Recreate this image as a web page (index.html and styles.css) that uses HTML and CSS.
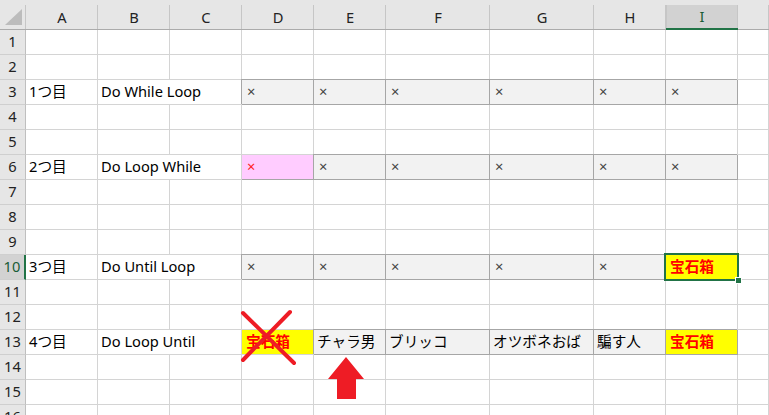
FILE: index.html
```html
<!DOCTYPE html>
<html lang="ja">
<head>
<meta charset="utf-8">
<title>Sheet</title>
<link rel="stylesheet" href="styles.css">
</head>
<body>
<div class="sheet">
  <div class="grid">
    <div class="ch corner"><span class="tri"></span></div>
    <div class="ch">A</div><div class="ch">B</div><div class="ch">C</div><div class="ch">D</div><div class="ch">E</div><div class="ch">F</div><div class="ch">G</div><div class="ch">H</div><div class="ch sel">I</div><div class="ch"></div>

    <div class="rh">1</div><div class="c"></div><div class="c"></div><div class="c"></div><div class="c"></div><div class="c"></div><div class="c"></div><div class="c"></div><div class="c"></div><div class="c"></div><div class="c"></div>
    <div class="rh">2</div><div class="c"></div><div class="c"></div><div class="c"></div><div class="c"></div><div class="c"></div><div class="c"></div><div class="c"></div><div class="c"></div><div class="c"></div><div class="c"></div>
    <div class="rh">3</div><div class="c">1つ目</div><div class="c span2">Do While Loop</div><div class="c b x">×</div><div class="c b x">×</div><div class="c b x">×</div><div class="c b x">×</div><div class="c b x">×</div><div class="c b x">×</div><div class="c"></div>
    <div class="rh">4</div><div class="c"></div><div class="c"></div><div class="c"></div><div class="c"></div><div class="c"></div><div class="c"></div><div class="c"></div><div class="c"></div><div class="c"></div><div class="c"></div>
    <div class="rh">5</div><div class="c"></div><div class="c"></div><div class="c"></div><div class="c"></div><div class="c"></div><div class="c"></div><div class="c"></div><div class="c"></div><div class="c"></div><div class="c"></div>
    <div class="rh">6</div><div class="c">2つ目</div><div class="c span2">Do Loop While</div><div class="c pink x">×</div><div class="c b x">×</div><div class="c b x">×</div><div class="c b x">×</div><div class="c b x">×</div><div class="c b x">×</div><div class="c"></div>
    <div class="rh">7</div><div class="c"></div><div class="c"></div><div class="c"></div><div class="c"></div><div class="c"></div><div class="c"></div><div class="c"></div><div class="c"></div><div class="c"></div><div class="c"></div>
    <div class="rh">8</div><div class="c"></div><div class="c"></div><div class="c"></div><div class="c"></div><div class="c"></div><div class="c"></div><div class="c"></div><div class="c"></div><div class="c"></div><div class="c"></div>
    <div class="rh">9</div><div class="c"></div><div class="c"></div><div class="c"></div><div class="c"></div><div class="c"></div><div class="c"></div><div class="c"></div><div class="c"></div><div class="c"></div><div class="c"></div>
    <div class="rh rsel">10</div><div class="c">3つ目</div><div class="c span2">Do Until Loop</div><div class="c b x">×</div><div class="c b x">×</div><div class="c b x">×</div><div class="c b x">×</div><div class="c b x">×</div><div class="c b yel active">宝石箱</div><div class="c"></div>
    <div class="rh">11</div><div class="c"></div><div class="c"></div><div class="c"></div><div class="c"></div><div class="c"></div><div class="c"></div><div class="c"></div><div class="c"></div><div class="c"></div><div class="c"></div>
    <div class="rh">12</div><div class="c"></div><div class="c"></div><div class="c"></div><div class="c"></div><div class="c"></div><div class="c"></div><div class="c"></div><div class="c"></div><div class="c"></div><div class="c"></div>
    <div class="rh">13</div><div class="c">4つ目</div><div class="c span2">Do Loop Until</div><div class="c yel">宝石箱</div><div class="c b">チャラ男</div><div class="c b">ブリッコ</div><div class="c b">オツボネおば</div><div class="c b">騙す人</div><div class="c b yel">宝石箱</div><div class="c"></div>
    <div class="rh">14</div><div class="c"></div><div class="c"></div><div class="c"></div><div class="c"></div><div class="c"></div><div class="c"></div><div class="c"></div><div class="c"></div><div class="c"></div><div class="c"></div>
    <div class="rh">15</div><div class="c"></div><div class="c"></div><div class="c"></div><div class="c"></div><div class="c"></div><div class="c"></div><div class="c"></div><div class="c"></div><div class="c"></div><div class="c"></div>
    <div class="rh">16</div><div class="c"></div><div class="c"></div><div class="c"></div><div class="c"></div><div class="c"></div><div class="c"></div><div class="c"></div><div class="c"></div><div class="c"></div><div class="c"></div>
  </div>
  <svg class="overlay" width="769" height="415" viewBox="0 0 769 415" xmlns="http://www.w3.org/2000/svg">
    <line x1="243" y1="313" x2="294" y2="363" stroke="#ee1c25" stroke-width="4" stroke-linecap="round"/>
    <line x1="290" y1="312" x2="243" y2="360" stroke="#ee1c25" stroke-width="4" stroke-linecap="round"/>
    <polygon points="346,357 364,379 356,379 356,399 337,399 337,379 328,379" fill="#ee1c25"/>
  </svg>
</div>
</body>
</html>
```

FILE: styles.css
```css
html, body {
  margin: 0;
  padding: 0;
  background: #ffffff;
  overflow: hidden;
}
body {
  width: 769px;
  height: 415px;
}
.sheet {
  position: relative;
  width: 769px;
  height: 415px;
  overflow: hidden;
  font-family: "Noto Sans", "Noto Sans CJK JP", sans-serif;
  font-size: 14.67px;
  color: #000;
}
.grid {
  display: grid;
  grid-template-columns: 26px repeat(5, 72px) 104px 104px 72px 72px 1fr;
  grid-template-rows: 30px;
  grid-auto-rows: 25px;
}
.grid > div {
  box-sizing: border-box;
  white-space: nowrap;
  overflow: visible;
}
.ch {
  background: linear-gradient(#e6e6e6 0 5px, #c6c6c6 5px) right / 1px 100% no-repeat, #e6e6e6;
  border-bottom: 1px solid #ababab;
  text-align: center;
  line-height: 24px;
  padding-top: 5px;
  color: #222;
  font-family: "Noto Sans", sans-serif;
}
.ch.sel {
  background: linear-gradient(#e6e6e6 0 5px, #c6c6c6 5px) right / 1px 100% no-repeat,
              linear-gradient(#e6e6e6 0 5px, #c6c6c6 5px) left / 1px 100% no-repeat,
              linear-gradient(#e6e6e6 0 5px, #d2d2d2 5px);
  border-bottom: 2px solid #217346;
  line-height: 23px;
  color: #185c37;
}
.corner {
  position: relative;
}
.tri {
  position: absolute;
  left: 5px;
  top: 9px;
  width: 17px;
  height: 16px;
  background: #bcbcbc;
  clip-path: polygon(100% 0, 100% 100%, 0 100%);
}
.rh {
  background: #e6e6e6;
  border-right: 1px solid #bfbfbf;
  border-bottom: 1px solid #cfcfcf;
  text-align: center;
  line-height: 22px;
  color: #222;
  font-family: "Noto Sans", sans-serif;
}
.rh.rsel {
  background: #d2d2d2;
  border-right: 2px solid #217346;
  color: #185c37;
}
.c {
  border-right: 1px solid #d4d4d4;
  border-bottom: 1px solid #d4d4d4;
  line-height: 22px;
  padding-left: 3px;
}
.span2 {
  grid-column: span 2;
}
.b {
  background: #f2f2f2;
  border-right-color: #a6a6a6;
  border-bottom-color: #a6a6a6;
  box-shadow: -1px -1px 0 #a6a6a6;
}
.x {
  padding-left: 5px;
  color: #444;
}
.pink {
  background: #ffccff;
  border-right-color: #a6a6a6;
  border-bottom-color: #a6a6a6;
  color: #ff2020;
}
.yel {
  background: #ffff00;
  color: #ff0000;
  font-weight: bold;
  padding-left: 4px;
}
.active {
  position: relative;
}
.active::after {
  content: "";
  position: absolute;
  left: -2px;
  top: -2px;
  right: -2px;
  bottom: -2px;
  border: 2px solid #217346;
}
.active::before {
  content: "";
  position: absolute;
  right: -5px;
  bottom: -5px;
  width: 5px;
  height: 5px;
  background: #217346;
  border: 1px solid #ffffff;
  z-index: 2;
}
.overlay {
  position: absolute;
  left: 0;
  top: 0;
  pointer-events: none;
}
```
